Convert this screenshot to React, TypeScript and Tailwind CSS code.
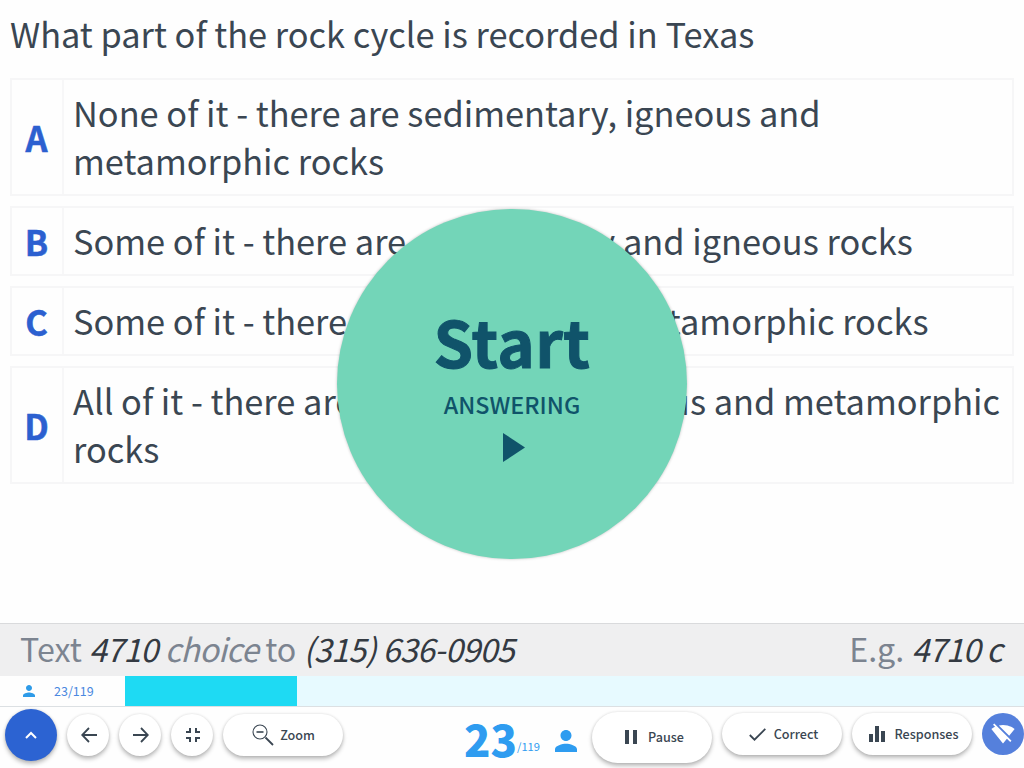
import type { ReactNode } from "react";

const answers = [
  { key: "A", lines: ["None of it - there are sedimentary, igneous and", "metamorphic rocks"] },
  { key: "B", lines: ["Some of it - there are sedimentary and igneous rocks"] },
  { key: "C", lines: ["Some of it - there are igneous and metamorphic rocks"] },
  { key: "D", lines: ["All of it - there are sedimentary, igneous and metamorphic", "rocks"] },
];

const shadow = "shadow-[0_3px_4px_rgba(0,0,0,0.25),0_0_3px_rgba(0,0,0,0.12)]";

function Person({ className }: { className: string }) {
  return (
    <svg viewBox="4 4 16 16" className={className} fill="currentColor">
      <path d="M12 12c2.21 0 4-1.79 4-4s-1.79-4-4-4-4 1.79-4 4 1.79 4 4 4zm0 2c-2.67 0-8 1.34-8 4v2h16v-2c0-2.66-5.33-4-8-4z" />
    </svg>
  );
}

function Round({ children }: { children: ReactNode }) {
  return (
    <button className={`flex size-[42px] shrink-0 items-center justify-center rounded-full bg-white ${shadow}`}>
      {children}
    </button>
  );
}

function Pill({ children, className }: { children: ReactNode; className: string }) {
  return (
    <button className={`flex w-[120px] shrink-0 items-center justify-center rounded-full bg-white text-[12.6px] font-medium leading-[20px] ${shadow} ${className}`}>
      {children}
    </button>
  );
}

export default function App() {
  return (
    <div className="relative flex h-[768px] w-[1024px] flex-col overflow-hidden bg-[#fefefe] font-['Noto_Sans_CJK_SC','Noto_Sans_CJK_JP',sans-serif] text-[#3a4652]">
      <main className="flex h-[623px] flex-col px-[10px] text-[34.36px]">
        <h1 className="h-[78px] whitespace-nowrap pt-[9px] leading-[48px]">What part of the rock cycle is recorded in Texas</h1>
        <div className="flex flex-col gap-[10px]">
          {answers.map((a) => (
            <div key={a.key} className="flex border-2 border-[#f6f6f7]">
              <div className="flex w-[52px] shrink-0 items-center justify-center border-r-2 border-[#f7f7f8] pb-[1px] pr-px font-bold leading-[48px] text-[#2c60d0] [-webkit-text-stroke:0.5px_currentColor]">
                {a.key}
              </div>
              <div className="pb-[10px] pl-[9px] pt-[8px]">
                {a.lines.map((l) => (
                  <p key={l} className="whitespace-nowrap leading-[48px]">{l}</p>
                ))}
              </div>
            </div>
          ))}
        </div>
      </main>

      <button className="absolute left-[337px] top-[209px] flex size-[350px] flex-col items-center rounded-full bg-[#73d5b8] pt-[91px] text-[#10536a] shadow-[0_0_3px_rgba(0,0,0,0.25)]">
        <span className="text-[63.5px] font-bold leading-[80px] tracking-[0.4px] [-webkit-text-stroke:1px_currentColor]">Start</span>
        <span className="mt-[9px] text-[23.3px] font-medium leading-[30px]">ANSWERING</span>
        <svg viewBox="0 0 22 29" className="ml-[4px] mt-[14px] h-[29px] w-[22px]" fill="currentColor">
          <path d="M0 0L22 14.5L0 29Z" />
        </svg>
      </button>

      <div className="flex h-[53px] items-start justify-between border-t border-[#d9dadc] bg-[#efeff0] pl-[20px] pr-[22px] text-[32.2px] leading-[48px] text-[#7c8490]">
        <p className="whitespace-nowrap">
          Text <i className="tracking-[-0.75px] text-[#343a42]">4710</i> <i className="tracking-[-0.75px]">choice</i> to{" "}
          <i className="tracking-[-0.6px] text-[#343a42]">(315) 636-0905</i>
        </p>
        <p className="whitespace-nowrap">
          E.g. <i className="tracking-[-0.75px] text-[#343a42]">4710 c</i>
        </p>
      </div>

      <div className="flex h-[31px] border-b border-[#dce0e3] bg-[#e7faff]">
        <div className="flex w-[125px] items-center bg-[#fefefe] pl-[23px] text-[12.5px] text-[#4a88e0]">
          <Person className="size-[12px] text-[#2e9be8]" />
          <span className="ml-[19px]">23/119</span>
        </div>
        <div className="w-[172px] bg-[#1edaf3]" />
      </div>

      <footer className="flex h-[61px] items-start">
        <button className={`ml-[5px] mt-[2px] flex size-[52px] items-center justify-center rounded-full bg-[#2c63d2] ${shadow}`}>
          <svg viewBox="0 0 12 8" className="h-[8px] w-[12px]" fill="none" stroke="white" strokeWidth="2">
            <path d="M1 7L6 2L11 7" />
          </svg>
        </button>
        <div className="ml-[10px] mt-[7px] flex gap-[10px]">
          <Round>
            <svg viewBox="0 0 16 16" className="ml-[2px] size-[16px]" fill="none" stroke="currentColor" strokeWidth="1.8">
              <path d="M16 8H1.5M8 1L1.2 8L8 15" />
            </svg>
          </Round>
          <Round>
            <svg viewBox="0 0 16 16" className="ml-[2px] size-[16px]" fill="none" stroke="currentColor" strokeWidth="1.8">
              <path d="M0 8H14.5M8 1L14.8 8L8 15" />
            </svg>
          </Round>
          <Round>
            <svg viewBox="0 0 14 14" className="ml-[2px] size-[14px]" fill="none" stroke="currentColor" strokeWidth="2">
              <path d="M0 4H4V0M10 0V4H14M0 10H4V14M10 14V10H14" />
            </svg>
          </Round>
          <Pill className="h-[42px] pl-px">
            <svg viewBox="0 0 22 22" className="mr-[6px] size-[22px]" fill="none" stroke="currentColor">
              <circle cx="8" cy="8" r="7" strokeWidth="1.1" />
              <path d="M4.5 8H11.5" strokeWidth="1.6" />
              <path d="M13.5 13.5L21 21" strokeWidth="1.8" />
            </svg>
            Zoom
          </Pill>
        </div>
        <div className="ml-[121px] flex w-[114px] text-[#2e9cf0]">
          <span className="w-[53px] pt-[2px] text-[43.5px] font-black leading-[60px]">23</span>
          <span className="mt-[29px] w-[23px] text-[11.2px] leading-[20px]">/119</span>
          <Person className="ml-[15px] mt-[23px] size-[22px] shrink-0" />
        </div>
        <Pill className="ml-[14px] mt-[5px] h-[51px] pb-[2px] pl-[5px]">
          <svg viewBox="0 0 12 14" className="mr-[11px] h-[14px] w-[12px]" fill="currentColor">
            <path d="M0 0H4V14H0ZM8 0H12V14H8Z" />
          </svg>
          Pause
        </Pill>
        <Pill className="ml-[10px] mt-[6px] h-[42px] pl-[3px]">
          <svg viewBox="0 0 17 13" className="mr-[8px] h-[13px] w-[17px]" fill="none" stroke="currentColor" strokeWidth="1.8">
            <path d="M0.8 7L5.5 11.7L16.3 0.9" />
          </svg>
          Correct
        </Pill>
        <Pill className="ml-[10px] mt-[6px] h-[42px] pl-[4px]">
          <svg viewBox="0 0 16 16" className="mr-[9px] size-[16px]" fill="currentColor">
            <path d="M0 8H4V16H0ZM6 0H10V16H6ZM12 5H16V16H12Z" />
          </svg>
          Responses
        </Pill>
        <button className="ml-[10px] mt-[6px] flex size-[42px] shrink-0 items-center justify-center rounded-full bg-[#5580dc] text-white">
          <svg viewBox="0 0 24 24" className="size-[24px]" fill="currentColor">
            <path d="M23.64 7c-.45-.34-4.93-4-11.64-4-1.5 0-2.89.19-4.15.48L18.18 13.8 23.64 7zm-6.6 8.22L3.27 1.44 2 2.72l2.05 2.06C1.91 5.76.59 6.82.36 7l11.63 14.49.01.01.01-.01 3.9-4.86 3.32 3.32 1.27-1.27-3.46-3.46z" />
          </svg>
        </button>
      </footer>
    </div>
  );
}
